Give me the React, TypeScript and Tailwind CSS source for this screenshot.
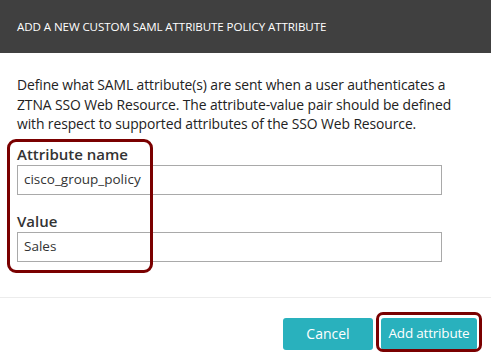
import type { FC } from 'react';

const Field: FC<{ label: string; value: string; className?: string }> = ({ label, value, className }) => (
  <div className={className}>
    <label className="block text-[15px] leading-[20px] font-semibold text-[#333]">{label}</label>
    <div className="mt-[1px] h-[30px] w-[425px] border border-[#a9a9a9] bg-white px-[6px] flex items-center text-[13.5px] text-[#333]">
      {value}
    </div>
  </div>
);

const App: FC = () => {
  return (
    <div className="w-[491px] h-[364px] bg-white font-['Open_Sans','Noto_Sans',sans-serif] relative overflow-hidden">
      <header className="h-[53px] bg-[#404040] px-[17px] flex items-center">
        <h2 className="text-[11.6px] text-white tracking-[-0.1px]">
          ADD A NEW CUSTOM SAML ATTRIBUTE POLICY ATTRIBUTE
        </h2>
      </header>

      <div className="px-[17px] pt-[22px]">
        <p className="text-[13.9px] leading-[19.5px] text-[#222] tracking-[-0.1px]">
          Define what SAML attribute(s) are sent when a user authenticates a
          <br />
          ZTNA SSO Web Resource. The attribute-value pair should be defined
          <br />
          with respect to supported attributes of the SSO Web Resource.
        </p>

        <Field label="Attribute name" value="cisco_group_policy" className="mt-[10px]" />
        <Field label="Value" value="Sales" className="mt-[16px]" />
      </div>

      <div className="mt-[35px] border-t border-[#ececec]" />

      <div className="flex justify-end gap-[8px] pr-[14px] pt-[20px]">
        <button className="h-[32px] w-[90px] rounded-[3px] bg-[#29b1bd] text-white text-[14px]">Cancel</button>
        <button className="h-[32px] w-[96px] rounded-[3px] bg-[#29b1bd] text-white text-[13.5px] tracking-[-0.2px]">
          Add attribute
        </button>
      </div>

      {/* annotation highlights */}
      <div className="absolute left-[7px] top-[139px] w-[146px] h-[134px] border-[3px] border-[#7a0000] rounded-[9px] pointer-events-none" />
      <div className="absolute left-[376px] top-[312px] w-[106px] h-[40px] border-[3px] border-[#7a0000] rounded-[7px] pointer-events-none" />
    </div>
  );
};

export default App;
